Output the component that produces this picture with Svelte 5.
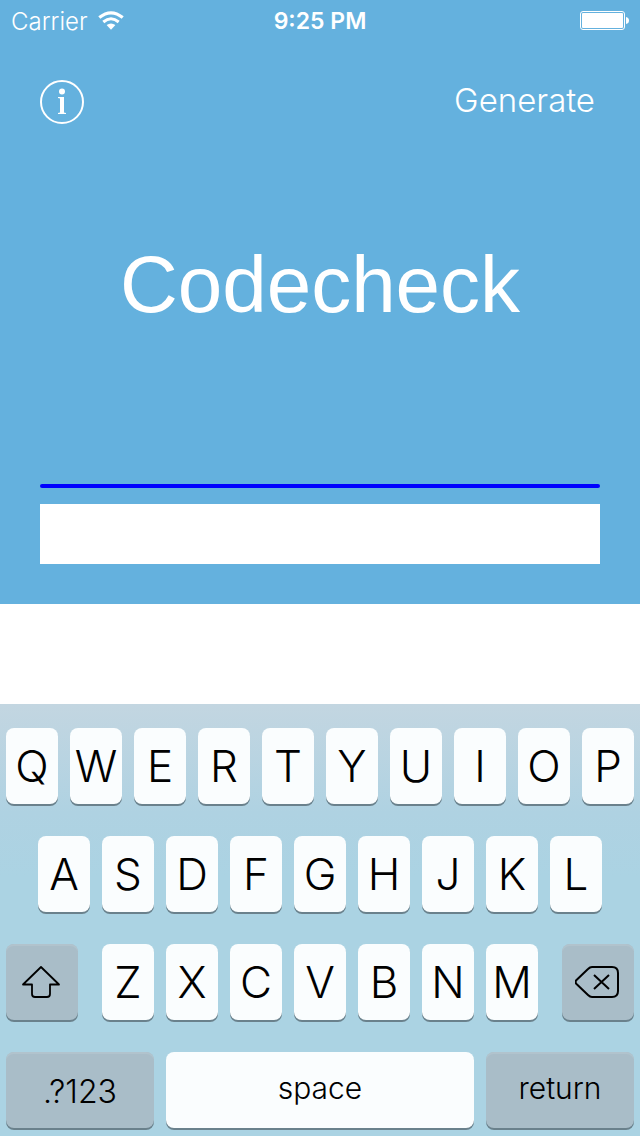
<script>
  const top = [...'QWERTYUIOP'];
  const home = [...'ASDFGHJKL'];
  const bottom = [...'ZXCVBNM'];
  let code = $state('');
  const type = (letter) => (code += letter);
  const erase = () => (code = code.slice(0, -1));
</script>

{#snippet letters(list)}
  {#each list as letter}
    <button class="key" onclick={() => type(letter)}>{letter}</button>
  {/each}
{/snippet}

<div class="screen">
  <main>
    <div class="status">
      <div class="carrier">
        <span>Carrier</span>
        <svg width="26" height="20" viewBox="0 0 26 20" fill="none" stroke="#fff" aria-hidden="true">
          <path d="M1.300 6.600Q13-3 24.700 6.600" stroke-width="3.200" />
          <path d="M5.300 11Q13 4.600 20.700 11" stroke-width="3" />
          <path d="M13 18.800L8.600 14Q13 10.800 17.400 14Z" fill="#fff" stroke="none" />
        </svg>
      </div>
      <time>9:25 PM</time>
      <div class="battery">
        <svg width="50" height="20" viewBox="0 0 50 20" aria-hidden="true">
          <rect x="1.500" y=".5" width="44" height="18" rx="2.500" fill="none" stroke="#fff" />
          <rect x="3" y="2" width="41" height="15" rx="1" fill="#fff" />
          <path d="M47 6Q50 6.500 50 9.500T47 13Z" fill="#fff" />
        </svg>
      </div>
    </div>

    <nav>
      <button class="info" aria-label="Information">
        <svg width="44" height="44" viewBox="0 0 44 44" aria-hidden="true">
          <circle cx="22" cy="22" r="21" fill="none" stroke="#fff" stroke-width="2" />
          <circle cx="22" cy="11.500" r="3" fill="#fff" />
          <path d="M18 17H24V32.500L26 33V34H18V33L20 32.500V18.500L18 18Z" fill="#fff" />
        </svg>
      </button>
      <button class="generate">Generate</button>
    </nav>

    <h1>Codecheck</h1>
    <div class="rule"></div>
    <input type="text" aria-label="Code" bind:value={code} />
  </main>

  <div class="keyboard">
    <div class="row">{@render letters(top)}</div>
    <div class="row home">{@render letters(home)}</div>
    <div class="row third">
      <button class="key dark side" aria-label="Shift">
        <svg width="42" height="34" viewBox="0 0 42 34" fill="none" stroke="#000" stroke-width="1.800" stroke-linejoin="round" aria-hidden="true">
          <path d="M20 2L38 19.500H29V29Q29 32 26 32H14Q11 32 11 29V19.500H2Z" />
        </svg>
      </button>
      <div class="row middle">{@render letters(bottom)}</div>
      <button class="key dark side" aria-label="Delete" onclick={erase}>
        <svg width="46" height="34" viewBox="0 0 46 34" fill="none" stroke="#000" stroke-width="2" stroke-linejoin="round" aria-hidden="true">
          <path d="M17 2H37Q43 2 43 8V26Q43 32 37 32H17Q15 32 13 30L1.500 19Q-.5 17 1.500 15L13 4Q15 2 17 2Z" />
          <path d="M19 10L34 24M34 10L19 24" />
        </svg>
      </button>
    </div>
    <div class="row">
      <button class="key dark symbols wide">.?123</button>
      <button class="key word" onclick={() => type(' ')}>space</button>
      <button class="key dark word wide">return</button>
    </div>
  </div>
</div>

<style>
  :global(body) {
    background: #fff;
  }
  .screen {
    min-height: 100vh;
    display: flex;
    flex-direction: column;
    justify-content: space-between;
    font-family: Inter, "Liberation Sans", sans-serif;
    font-weight: 300;
  }
  button {
    border: 0;
    padding: 0;
    background: none;
    color: inherit;
    font: inherit;
  }
  svg {
    display: block;
  }
  main {
    background: #64b1de;
    color: #fff;
    padding-bottom: 40px;
  }
  .status {
    display: grid;
    grid-template-columns: 1fr auto 1fr;
    align-items: center;
    height: 42px;
    padding: 0 11px;
    font-size: 24px;
  }
  .carrier {
    display: flex;
    align-items: center;
    gap: 10px;
  }
  time {
    font-size: 23px;
    font-weight: 600;
  }
  .battery {
    justify-self: end;
  }
  nav {
    display: flex;
    justify-content: space-between;
    align-items: flex-start;
    padding: 38px 45px 0 40px;
  }
  .generate {
    font-size: 33px;
    line-height: 40px;
  }
  h1 {
    margin: 111px 40px 149px;
    font-family: "Liberation Sans", Arial, sans-serif;
    font-size: 80px;
    line-height: 100px;
    font-weight: 400;
    text-align: center;
  }
  .rule {
    height: 4px;
    margin: 0 40px 16px;
    border-radius: 2px;
    background: #00f;
  }
  input {
    display: block;
    box-sizing: border-box;
    width: calc(100% - 80px);
    height: 60px;
    margin: 0 40px;
    padding: 0 12px;
    border: 0;
    border-radius: 0;
    outline: 0;
    background: #fff;
    font: 300 28px Inter, "Liberation Sans", sans-serif;
  }
  .keyboard {
    display: flex;
    flex-direction: column;
    gap: 32px;
    padding: 24px 6px 8px;
    background: linear-gradient(#c3d6e1, #afd2e2 25%, #abd3e3 40%, #abd3e3);
    color: #000;
  }
  .row {
    display: flex;
    gap: 12px;
  }
  .home {
    padding: 0 32px;
  }
  .third {
    gap: 24px;
  }
  .middle {
    flex: 1;
  }
  .key {
    box-sizing: border-box;
    flex: 1 1 0;
    min-width: 0;
    height: 76px;
    display: flex;
    align-items: center;
    justify-content: center;
    border-radius: 8px;
    background: #fafdfe;
    box-shadow: 0 2px #6a818c;
    font-size: 44px;
  }
  .dark {
    background: #a9bdc8;
    box-shadow: 0 2px #6a818c, inset 0 2px #b1c3cd;
  }
  .side {
    flex: 0 0 72px;
  }
  .word {
    padding-bottom: 4px;
    font-size: 30px;
  }
  .symbols {
    padding-top: 2px;
    font-size: 32px;
  }
  .wide {
    flex: 0 0 148px;
  }
</style>
